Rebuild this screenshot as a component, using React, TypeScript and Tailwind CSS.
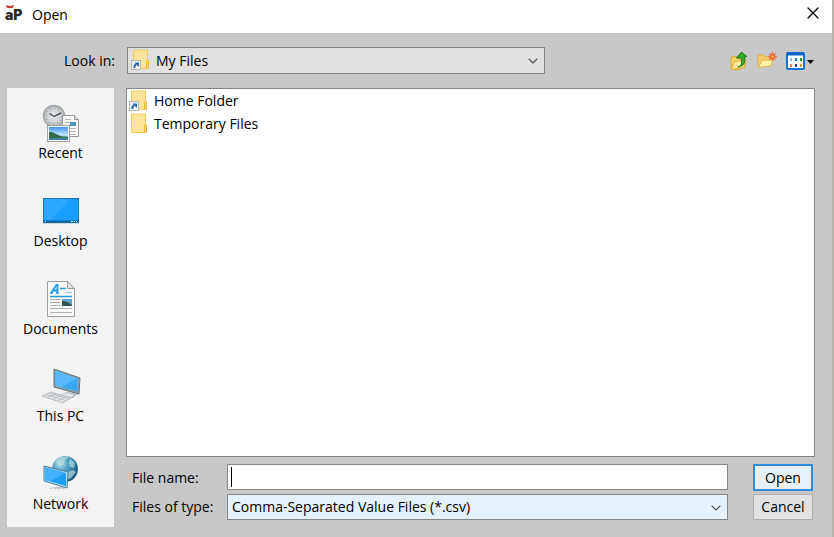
import { useState } from "react"
import type { ReactNode } from "react"
import { ChevronDown, X } from "lucide-react"

interface Place {
  name: string
  icon: ReactNode
}

function Folder({ linked = false }: { linked?: boolean }) {
  return (
    <svg viewBox="0 0 18 21" className="h-[21px] w-[18px] shrink-0" aria-hidden="true">
      <path d="M2.5 1h14v11h1v7.5h-15z" fill="#ffe599" stroke="#efcb5d" />
      <path d="M15.5 19.5v-6.5q0-1 1-1h1v7.5z" fill="#fbd768" stroke="#e5bb42" />
      <path d="M3 19.5h14" stroke="#f3c84f" />
      {linked && (
        <>
          <rect x="0.5" y="11.5" width="9" height="9" fill="#f0f3f6" stroke="#b4b8bd" />
          <path d="M3.5 19c-.4-2 .4-3.200 2-3.500" fill="none" stroke="#2968ae" strokeWidth="2" />
          <path d="M3.500 13.500h4.500v4.500z" fill="#2968ae" />
        </>
      )}
    </svg>
  )
}

function Logo() {
  return (
    <span className="relative block w-5 font-[Inter,sans-serif] text-sm leading-5 font-black text-[#2b2b30]" aria-hidden="true">
      aP
      <svg viewBox="0 0 10 4" className="absolute top-0 left-0 h-1 w-[10px]">
        <path d="M1 0l4 1 4-1-1 3H2z" fill="#c9423a" />
      </svg>
    </span>
  )
}

function RecentIcon() {
  return (
    <svg viewBox="0 0 38 38" className="h-[38px] w-[38px]" aria-hidden="true">
      <defs>
        <linearGradient id="photo" x1="0" y1="0" x2="0" y2="1">
          <stop offset="0" stopColor="#4593ed" />
          <stop offset=".6" stopColor="#bde5fa" />
          <stop offset="1" stopColor="#5a9dcc" />
        </linearGradient>
        <radialGradient id="dial">
          <stop offset="0" stopColor="#efefef" />
          <stop offset="1" stopColor="#b9bdbf" />
        </radialGradient>
      </defs>
      <circle cx="12" cy="12" r="10.5" fill="url(#dial)" stroke="#a5a8aa" strokeWidth="1.5" />
      <circle cx="12" cy="12" r="8" fill="none" stroke="#85898b" strokeDasharray="1 3.19" />
      <path d="M7.500 9.500l4.500 3 7-3.500" fill="none" stroke="#4c5256" strokeWidth="1.5" />
      <path d="M20.5 11.5h12l4 4v17h-16z" fill="#fafafa" stroke="#999" />
      <path d="M32.5 11.5v4h4" fill="#ddd" stroke="#999" />
      <path d="M23 15.5h6M23 18.5h5M23 24.5h11M23 27.5h11M23 30.5h11" stroke="#aab3b8" />
      <rect x="28" y="18" width="6" height="4" fill="#4c95bb" />
      <rect x="5.5" y="21.5" width="22" height="16" fill="#fafafa" stroke="#a1a3a4" />
      <rect x="7" y="23" width="19" height="13" fill="url(#photo)" />
      <path d="M7 28c5 0 5 1 9 3s5 1 10 2v1H7z" fill="#356b49" />
      <path d="M7 34h19v2H7z" fill="#3f7fa8" />
    </svg>
  )
}

function DesktopIcon() {
  return (
    <svg viewBox="0 0 36 26" className="h-[26px] w-9" aria-hidden="true">
      <rect x=".5" y=".5" width="35" height="24" fill="#189fff" stroke="#1674b6" />
      <path d="M1 1h26L8 22H1z" fill="#2ca9ff" />
      <path d="M1 23.5h34" stroke="#09659f" strokeWidth="2" />
      <path d="M2 23.5h1M28 23.5h2M31 23.5h1M33 23.5h1" stroke="#d8efff" />
      <path d="M0 25.5h36" stroke="#d0d7dc" />
    </svg>
  )
}

function DocumentIcon() {
  return (
    <svg viewBox="0 0 28 36" className="h-9 w-7" aria-hidden="true">
      <path d="M.5.5h20l7 7v28H.5z" fill="#fafafa" stroke="#9b9da0" />
      <path d="M20.500.5v7h7z" fill="#e2e4e5" stroke="#9b9da0" />
      <path d="M4 12l5.500-8h1v8M6 9.500h5" fill="none" stroke="#269bdc" strokeWidth="1.8" />
      <path d="M3 12h3M9 12h3M13 7.500h6M3 15.500h22" stroke="#269bdc" strokeWidth="1.6" />
      <path d="M19 11.500h6" stroke="#8cc9ea" />
      <path d="M3 18.5h10M3 21.5h10M3 24.5h10M3 27.5h22M3 31.5h22" stroke="#aeb1b4" />
      <rect x="15" y="18" width="10" height="7" fill="#63a5cf" />
      <path d="M15 20q5 0 10 4v1H15z" fill="#31524e" />
    </svg>
  )
}

function ComputerIcon() {
  return (
    <svg viewBox="0 0 40 36" className="h-9 w-10" aria-hidden="true">
      <path d="M19 26l8-2 9 2-4 4-8-1z" fill="#aeb5b9" />
      <path d="M19 26l8-1 7 2-4 2-6-.500z" fill="#e3e7e9" />
      <path d="M13 1l26 9-1 16-25-7z" fill="#8da1ae" stroke="#60727c" />
      <path d="M14.500 2.500l22 8v13l-22-6z" fill="#35a9f8" />
      <path d="M14.500 2.500l22 8L20 19l-5.500-1.500z" fill="#5bb9fc" />
      <path d="M1 28l9-4 20 6-8 5z" fill="#e3e6e8" stroke="#b8bdc1" />
      <path d="M5 26.500l20 6M8 25l20 6M7 29.500l8-4M12 31l8-4M17 32.500l8-4" stroke="#b1b7bb" strokeWidth=".8" />
    </svg>
  )
}

function NetworkIcon() {
  return (
    <svg viewBox="0 0 36 38" className="h-[38px] w-9" aria-hidden="true">
      <defs>
        <radialGradient id="globe" cx=".32" cy=".3" r=".7">
          <stop offset="0" stopColor="#b1ddeb" />
          <stop offset=".5" stopColor="#4499bd" />
          <stop offset="1" stopColor="#205e86" />
        </radialGradient>
      </defs>
      <circle cx="22" cy="14" r="13" fill="url(#globe)" />
      <path d="M12 6l5-4 7-1 2 2-4 2-1 4-5 2-2-3zM27 3l5 5-1 5-4-1-1-4zM25 17l5-2 3 2-5 6-4 2z" fill="#bfe1df" opacity=".65" />
      <path d="M6 33q9 5 16 1l-2-3-6 1z" fill="#bdc4c8" />
      <path d="M9 34q6 2 11 0" fill="none" stroke="#f0f0f0" strokeWidth="2" />
      <path d="M1 11l24 6-1 16-23-7z" fill="#b6dded" stroke="#4f7f99" />
      <path d="M2 12.500l21 5.500v13L2 25z" fill="#1a9ff4" />
      <path d="M2 12.500l21 5.500L7 26.500l-5-1.500z" fill="#3fb1ff" />
    </svg>
  )
}

function UpFolderIcon() {
  return (
    <svg viewBox="0 0 18 20" className="h-5 w-[18px]" aria-hidden="true">
      <path d="M1 18V6l5-1 1 2h8v9l-8 3z" fill="#f3cf68" stroke="#d6a837" />
      <path d="M1.500 18.500l3-8 12-1.500-3 7.500z" fill="#ffeb9f" stroke="#ddb13d" />
      <path d="M8 16c4-1 4-5 3-9H6.500L11.500 1 17 5.500l-2.500.500c1 5 0 9-6.500 10z" fill="#35aa29" stroke="#177b1f" />
    </svg>
  )
}

function NewFolderIcon() {
  return (
    <svg viewBox="0 0 20 18" className="h-[18px] w-5" aria-hidden="true">
      <path d="M1 15V3h5l2 2h6v9z" fill="#f6ce68" stroke="#d9ac42" />
      <path d="M1.500 15.500L5 8h11.500l-3 6z" fill="#fff1a8" stroke="#ddb853" />
      <path d="M15.500 0v9M11 4.500h9M12.500 1.500l6 6M18.500 1.500l-6 6" stroke="#fa7143" strokeWidth="1.5" />
      <circle cx="15.500" cy="4.500" r="2" fill="#ffad43" stroke="#ed4f34" />
    </svg>
  )
}

function ViewIcon() {
  return (
    <svg viewBox="0 0 28 18" className="h-[18px] w-7" aria-hidden="true">
      <rect x="1" y="1" width="17" height="16" rx="1" fill="#fff" stroke="#1473d3" strokeWidth="2" />
      <path d="M1 2h17" stroke="#0862c4" strokeWidth="3" />
      <path d="M4 6h2v3H4z" fill="#a5a8cc" />
      <path d="M9 6h2v3H9z" fill="#1686de" />
      <path d="M14 6h2v3h-2z" fill="#189b26" />
      <path d="M4 12h2v3H4z" fill="#fb7b5d" />
      <path d="M9 12h2v3H9z" fill="#173f9b" />
      <path d="M14 12h2v3h-2z" fill="#d1a21f" />
      <path d="M21 8h7l-3.500 4z" fill="#000" />
    </svg>
  )
}

const places: Place[] = [
  { name: "Recent", icon: <RecentIcon /> },
  { name: "Desktop", icon: <DesktopIcon /> },
  { name: "Documents", icon: <DocumentIcon /> },
  { name: "This PC", icon: <ComputerIcon /> },
  { name: "Network", icon: <NetworkIcon /> },
]

const files = [
  { name: "Home Folder", linked: true },
  { name: "Temporary Files", linked: false },
]

export default function App() {
  const [fileName, setFileName] = useState("")

  return (
    <div className="flex min-h-screen flex-col border-r-2 border-[#b9b6b0] bg-[#c8c8c8] font-['Open_Sans','Noto_Sans',sans-serif] text-sm leading-5 text-black">
      <header className="flex h-[33px] items-center justify-between bg-white pr-[9px] pb-1 pl-[5px]">
        <div className="flex items-center gap-[7px]">
          <Logo />
          <h1>Open</h1>
        </div>
        <button aria-label="Close" className="-mt-1">
          <X className="h-5 w-5" strokeWidth={1.5} />
        </button>
      </header>

      <main className="flex flex-1 flex-col pr-[17px] pb-[10px] pl-[7px]">
        <div className="flex items-center pt-[14px] pb-[14px]">
          <label htmlFor="look-in" className="w-[120px] shrink-0 pr-3 text-right">Look in:</label>
          <div className="relative w-[418px]">
            <select id="look-in" className="block h-[27px] w-full appearance-none border border-[#858585] bg-[#e1e1e1] pl-7 outline-none">
              <option>My Files</option>
            </select>
            <span className="pointer-events-none absolute top-[2px] left-1"><Folder linked /></span>
            <ChevronDown className="pointer-events-none absolute top-[6px] right-1 h-4 w-4 text-[#555]" strokeWidth={1.7} />
          </div>
          <div className="ml-auto flex items-center gap-[9px] pr-px">
            <button aria-label="Up one level"><UpFolderIcon /></button>
            <button aria-label="New folder"><NewFolderIcon /></button>
            <button aria-label="View menu"><ViewIcon /></button>
          </div>
        </div>

        <div className="flex flex-1 gap-3">
          <nav className="flex w-[107px] shrink-0 flex-col bg-[#f3f3f3]">
            {places.map((place) => (
              <button key={place.name} className="flex flex-1 flex-col items-center pt-[15px]">
                <span className="flex h-10 items-center justify-center">{place.icon}</span>
                <span>{place.name}</span>
              </button>
            ))}
          </nav>

          <section className="flex min-w-0 flex-1 flex-col gap-[7px] pb-[7px]">
            <ul className="flex-1 border border-[#858585] bg-white px-[2px]">
              {files.map((file) => (
                <li key={file.name}>
                  <button className="flex h-[23px] items-center gap-[7px]">
                    <Folder linked={file.linked} />
                    {file.name}
                  </button>
                </li>
              ))}
            </ul>
            <form className="grid grid-cols-[89px_1fr_60px] gap-x-[6px] gap-y-[3px] pr-[2px] pl-[6px]" onSubmit={(e) => e.preventDefault()}>
              <label htmlFor="file-name" className="self-center">File name:</label>
              <div className="relative mr-[19px]">
                <input id="file-name" value={fileName} onChange={(e) => setFileName(e.target.value)} className="block h-[26px] w-full border border-[#858585] bg-white px-1 outline-none" />
                <span className="pointer-events-none absolute top-[3px] left-1 h-5 w-px bg-black" />
              </div>
              <button type="submit" className="h-[27px] border-2 border-[#2f8ddd] bg-[#e5f0f9]">Open</button>
              <label htmlFor="file-type" className="self-center">Files of type:</label>
              <div className="relative mr-[19px]">
                <select id="file-type" className="block h-[26px] w-full appearance-none border border-[#858585] bg-[#e5f1fb] pl-1 outline-none">
                  <option>Comma-Separated Value Files (*.csv)</option>
                </select>
                <ChevronDown className="pointer-events-none absolute top-[6px] right-1 h-4 w-4 text-[#555]" strokeWidth={1.7} />
              </div>
              <button type="button" className="h-[26px] border border-[#adadad] bg-[#e1e1e1]">Cancel</button>
            </form>
          </section>
        </div>
      </main>
    </div>
  )
}
